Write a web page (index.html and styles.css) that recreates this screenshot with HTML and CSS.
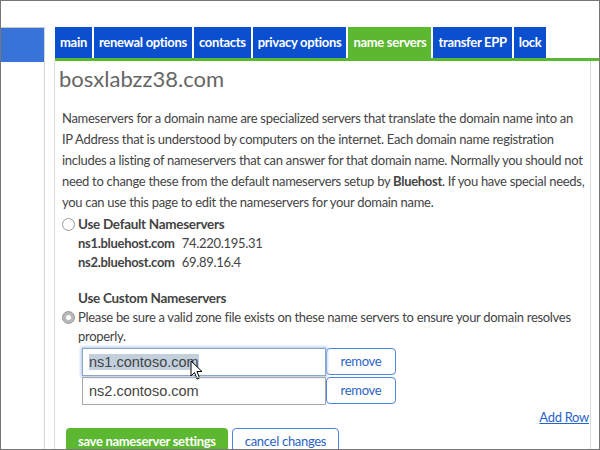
FILE: index.html
```html
<!DOCTYPE html>
<html>
<head>
<meta charset="utf-8">
<link rel="stylesheet" href="styles.css">
</head>
<body>
<div class="frame">
  <div class="sidebar">
    <div class="side-active"></div>
  </div>
  <div class="main">
    <div class="tabs">
      <div class="tab">main</div>
      <div class="tab">renewal options</div>
      <div class="tab">contacts</div>
      <div class="tab">privacy options</div>
      <div class="tab active">name servers</div>
      <div class="tab">transfer EPP</div>
      <div class="tab">lock</div>
    </div>
    <div class="panel">
      <h1 class="domain">bosxlabzz38.com</h1>
      <p class="intro">Nameservers for a domain name are specialized servers that translate the domain name into an<br>IP Address that is understood by computers on the internet. Each domain name registration<br>includes a listing of nameservers that can answer for that domain name. Normally you should not<br>need to change these from the default nameservers setup by <b>Bluehost</b>. If you have special needs,<br>you can use this page to edit the nameservers for your domain name.</p>

      <div class="option first">
        <span class="radio"></span>
        <div class="opt-body">
          <div class="opt-title">Use Default Nameservers</div>
          <div class="ns-row"><b>ns1.bluehost.com</b><span>74.220.195.31</span></div>
          <div class="ns-row"><b>ns2.bluehost.com</b><span>69.89.16.4</span></div>
        </div>
      </div>

      <div class="custom">
        <div class="opt-title custom-title">Use Custom Nameservers</div>
        <div class="option">
          <span class="radio checked"></span>
          <div class="opt-body">Please be sure a valid zone file exists on these name servers to ensure your domain resolves properly.</div>
        </div>
        <div class="ns-inputs">
          <div class="ns-input-row">
            <div class="field focused"><span class="sel">ns1.contoso.com</span>
              <svg class="cursor" width="14" height="21" viewBox="0 0 14 21"><path d="M1 1 L1 16 L4.5 12.5 L7 19 L9.5 18 L7 11.5 L12 11.5 Z" fill="#fff" stroke="#000" stroke-width="1" stroke-linejoin="round"/></svg>
            </div>
            <div class="btn-remove">remove</div>
          </div>
          <div class="ns-input-row">
            <div class="field">ns2.contoso.com</div>
            <div class="btn-remove">remove</div>
          </div>
        </div>
        <div class="add-row"><a>Add Row</a></div>
      </div>

      <div class="actions">
        <div class="btn-save">save nameserver settings</div>
        <div class="btn-cancel">cancel changes</div>
      </div>
    </div>
  </div>
</div>
</body>
</html>
```
FILE: styles.css
```css
html, body {
  margin: 0;
  padding: 0;
  background: #fff;
}
.frame {
  width: 600px;
  height: 450px;
  box-sizing: border-box;
  border: 1px solid #777;
  overflow: hidden;
  display: flex;
  padding-top: 26px;
  font-family: Lato, "Open Sans", sans-serif;
  letter-spacing: -0.3px;
  color: #444;
}
.sidebar {
  width: 43px;
  border-right: 1px solid #d6d6d6;
  flex: none;
}
.side-active {
  height: 34px;
  background: #3874d7;
  border-top: 1px solid #c8c8c8;
}
.main {
  margin-left: 9px;
  flex: 1;
  display: flex;
  flex-direction: column;
  min-width: 0;
}
.tabs {
  display: flex;
  gap: 2px;
  border-bottom: 3px solid #5cb830;
  margin-left: 1px;
}
.tab {
  height: 31px;
  line-height: 31px;
  padding: 0 5px;
  background: #0b4fcf;
  color: #fff;
  font-size: 13px;
  font-weight: 700;
  letter-spacing: -0.3px;
}
.tab.active {
  background: #5cb830;
}
.panel {
  flex: 1;
  border-left: 1px solid #d9d9d9;
  border-right: 1px solid #d9d9d9;
  margin-right: 8px;
  padding: 0 2px 0 7px;
}
.domain {
  margin: 3px 0 0 -3px;
  font-size: 22px;
  font-weight: 400;
  color: #666;
  line-height: 30px;
  letter-spacing: 0;
}
.intro {
  margin: 14px 0 0 0;
  font-size: 13px;
  line-height: 21px;
  color: #444;
  letter-spacing: -0.3px;
  white-space: nowrap;
}
.option {
  display: flex;
  align-items: flex-start;
  font-size: 13px;
  line-height: 19px;
}
.option.first {
  margin-top: 2px;
}
.radio {
  width: 13px;
  height: 13px;
  box-sizing: border-box;
  border: 1px solid #9a9a9a;
  border-radius: 50%;
  background: #fff;
  margin: 3px 3px 0 0;
  flex: none;
  position: relative;
}
.radio.checked {
  background: #b8b8b8;
  border-color: #9a9a9a;
}
.radio.checked::after {
  content: "";
  position: absolute;
  left: 3px;
  top: 3px;
  width: 5px;
  height: 5px;
  border-radius: 50%;
  background: #fff;
}
.opt-title {
  font-weight: 700;
  font-size: 13.5px;
}
.ns-row {
  font-size: 13px;
}
.ns-row b {
  margin-right: 7px;
}
.custom {
  margin-top: 17px;
}
.custom-title {
  margin-left: 16px;
  line-height: 19px;
}
.ns-inputs {
  margin: 2px 0 0 20px;
  display: flex;
  flex-direction: column;
  gap: 1px;
}
.ns-input-row {
  display: flex;
}
.field {
  width: 244px;
  height: 28px;
  box-sizing: border-box;
  border: 1px solid #a8a8a8;
  font-family: "Liberation Sans", Arial, sans-serif;
  letter-spacing: 0;
  font-size: 14.5px;
  color: #444;
  line-height: 26px;
  padding-left: 6px;
  position: relative;
}
.field.focused {
  border-color: #8aa6cf;
  box-shadow: 0 0 3px 1px #a6c0e6;
}
.sel {
  background: #c2cfdd;
}
.cursor {
  position: absolute;
  left: 107px;
  top: 11px;
}
.btn-remove {
  width: 70px;
  height: 27px;
  box-sizing: border-box;
  border: 1px solid #4f84d8;
  border-radius: 4px;
  color: #2b63c4;
  font-size: 13px;
  line-height: 25px;
  text-align: center;
}
.add-row {
  text-align: right;
  margin-top: 3px;
  font-size: 13px;
  line-height: 18px;
  margin-right: -1px;
}
.add-row a {
  color: #2a64c9;
  text-decoration: underline;
}
.actions {
  display: flex;
  gap: 4px;
  margin: 2px 0 0 4px;
}
.btn-save {
  background: #5cb830;
  color: #fff;
  font-weight: 700;
  font-size: 13px;
  border-radius: 4px 4px 0 0;
  padding: 0 12px;
  height: 26px;
  line-height: 26px;
}
.btn-cancel {
  border: 1px solid #4f84d8;
  border-radius: 4px;
  color: #2b63c4;
  font-size: 13px;
  padding: 0 12px;
  height: 26px;
  line-height: 24px;
}
```
